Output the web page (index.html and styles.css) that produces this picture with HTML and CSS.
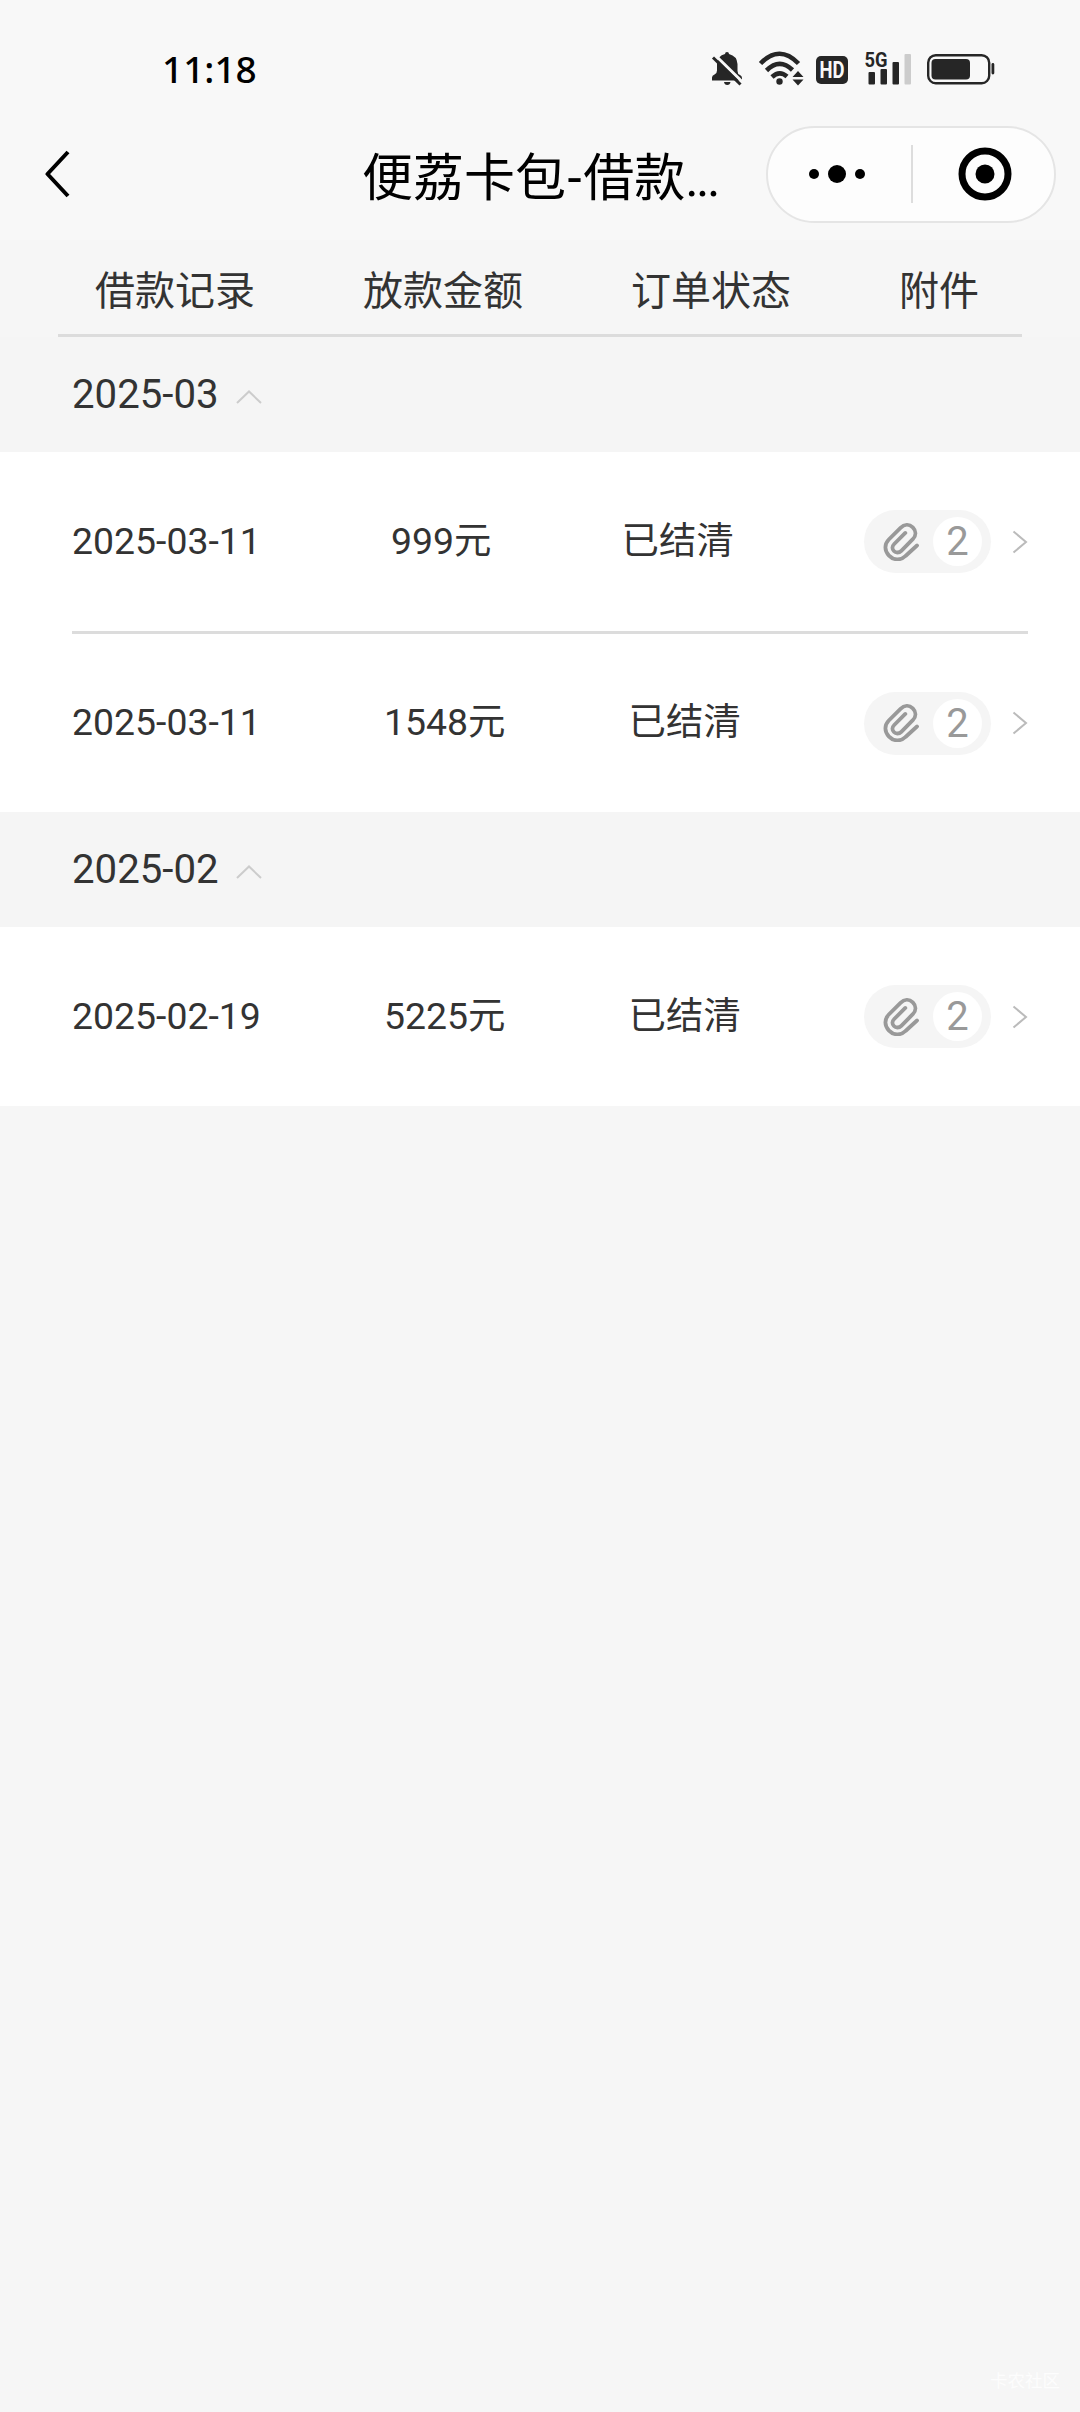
FILE: index.html
```html
<!DOCTYPE html>
<html lang="zh-CN">
<head>
  <meta charset="UTF-8" />
  <meta name="viewport" content="width=device-width, initial-scale=1.0"/>
  <title>便荔卡包-借款记录</title>
  <link rel="stylesheet" href="styles.css">
</head>
<body>
  <!-- shared icons -->
  <svg class="defs" width="0" height="0">
    <symbol id="clip" viewBox="0 0 36 38">
      <path d="M34 22.5 L22.5 33 C17.5 37.8 10.5 37.3 6 32.6 C1.3 27.8 1.2 21.3 5.8 16.5 L17.5 4.8 C21.2 1 26.2 1 29.8 4.4 C33.3 7.9 33.3 12.5 29.8 16.2 L18.3 27.8 C16 30.1 12.8 30 10.9 28 C8.9 26 9 23.2 11.2 21 L22.3 9.9" fill="none" stroke="#999" stroke-width="3.8" stroke-linecap="round" stroke-linejoin="round"/>
    </symbol>
    <symbol id="arrow" viewBox="0 0 16 24">
      <path d="M1.5 1.5 L14 12 L1.5 22.5" fill="none" stroke="#bbb" stroke-width="2"/>
    </symbol>
    <symbol id="up" viewBox="0 0 26 14">
      <path d="M1 13 L13 1.5 L25 13" fill="none" stroke="#ccc" stroke-width="2"/>
    </symbol>
  </svg>

  <div class="top">
    <div class="status">
      <span class="time">11:18</span>
      <svg class="status-icons" width="284" height="48" viewBox="711 45 284 48">
        <g fill="#262626">
          <!-- bell off -->
          <path d="M725 54 q0 -2 2 -2 q2 0 2 2 q8 2 8.500 10 v7 q0 3 2.500 4 q2 1 2 3 v2.500 h-30 v-3 q0 -2 2.500 -3 q2.500 -1 2.500 -4 v-7 q.5 -7.500 8 -9.500z"/>
          <path d="M724 82 h6.500 q-.5 3 -3.250 3 q-2.750 0 -3.250 -3z"/>
          <path d="M714.500 54.500 L743 82.500" stroke="#f8f8f8" stroke-width="3"/>
          <path d="M713 57.500 L740.500 84.500" stroke="#262626" stroke-width="3"/>
          <!-- wifi -->
          <g fill="none" stroke="#262626" stroke-width="4.600">
            <path d="M760.500 63.500 Q779.500 44 798.500 63.500"/>
            <path d="M766.500 70.500 Q779.500 57.500 792.500 70"/>
            <path d="M772 77 Q779.500 70 787 76.500"/>
          </g>
          <circle cx="779.500" cy="81.500" r="3.200"/>
          <path d="M792.500 77 L798 71 L803.500 77z M792.500 79.500 L798 85.500 L803.500 79.500z"/>
          <!-- HD -->
          <rect x="816" y="56" width="32" height="28" rx="5"/>
          <!-- signal -->
          <rect x="868.500" y="72" width="6.500" height="12.500" rx="1"/>
          <rect x="880.500" y="69" width="6.500" height="15.500" rx="1"/>
          <rect x="892.500" y="62" width="6.500" height="22.500" rx="1"/>
          <rect x="904.500" y="54" width="6.500" height="30.500" rx="1" fill="#ccc"/>
          <!-- battery -->
          <rect x="928.200" y="55.200" width="61" height="28" rx="7.500" fill="none" stroke="#262626" stroke-width="2.400"/>
          <rect x="931.500" y="59" width="38.500" height="20.500" rx="4"/>
          <rect x="991.500" y="63" width="2.800" height="11.500" rx="1.400"/>
        </g>
        <text class="hd" x="832" y="78" text-anchor="middle" textLength="25" lengthAdjust="spacingAndGlyphs">HD</text>
        <text class="net" x="864.500" y="67" textLength="23" lengthAdjust="spacingAndGlyphs">5G</text>
      </svg>
    </div>

    <div class="nav">
      <svg class="back" width="26" height="48" viewBox="0 0 26 48">
        <path d="M23 2 L2.500 24 L23 46" fill="none" stroke="#000" stroke-width="4" stroke-linejoin="round"/>
      </svg>
      <div class="title">便荔卡包<span class="dash">-</span>借款<span class="dots">...</span></div>
      <div class="capsule">
        <svg width="58" height="20" viewBox="0 0 58 20">
          <circle cx="6" cy="10" r="5"/>
          <circle cx="29" cy="10" r="9"/>
          <circle cx="52" cy="10" r="5"/>
        </svg>
        <span class="sep"></span>
        <svg width="54" height="54" viewBox="0 0 54 54">
          <circle cx="27" cy="27" r="23" fill="none" stroke="#000" stroke-width="7"/>
          <circle cx="27" cy="27" r="9.500"/>
        </svg>
      </div>
    </div>
  </div>

  <div class="thead">
    <span>借款记录</span>
    <span>放款金额</span>
    <span>订单状态</span>
    <span>附件</span>
  </div>

  <div class="month">2025-03 <svg width="26" height="14"><use href="#up"/></svg></div>
  <div class="list">
    <div class="row">
      <span>2025-03-11</span>
      <span>999元</span>
      <span>已结清</span>
      <div class="attach">
        <div class="pill"><svg width="36" height="38"><use href="#clip"/></svg><b>2</b></div>
        <svg width="16" height="24"><use href="#arrow"/></svg>
      </div>
    </div>
    <div class="row">
      <span>2025-03-11</span>
      <span>1548元</span>
      <span>已结清</span>
      <div class="attach">
        <div class="pill"><svg width="36" height="38"><use href="#clip"/></svg><b>2</b></div>
        <svg width="16" height="24"><use href="#arrow"/></svg>
      </div>
    </div>
  </div>

  <div class="month">2025-02 <svg width="26" height="14"><use href="#up"/></svg></div>
  <div class="list">
    <div class="row">
      <span>2025-02-19</span>
      <span>5225元</span>
      <span>已结清</span>
      <div class="attach">
        <div class="pill"><svg width="36" height="38"><use href="#clip"/></svg><b>2</b></div>
        <svg width="16" height="24"><use href="#arrow"/></svg>
      </div>
    </div>
  </div>

  <div class="watermark">卡农社区</div>
</body>
</html>
```
FILE: styles.css
```css
* {
  box-sizing: border-box;
}
body {
  margin: 0;
  min-height: 2412px;
  display: flex;
  flex-direction: column;
  background-color: #f6f6f6;
  color: #333;
  font-family: Roboto, 'Noto Sans CJK SC', sans-serif;
}
svg {
  display: block;
  flex: none;
}
.defs {
  position: absolute;
}
.top {
  height: 240px;
  background-color: #f8f8f8;
}
.status {
  height: 108px;
  padding: 30px 85px 0 162px;
  display: flex;
  align-items: center;
  justify-content: space-between;
}
.time {
  font-family: 'Noto Sans', sans-serif;
  font-size: 37px;
  font-weight: 500;
  line-height: 78px;
  color: #000;
}
.hd {
  font-size: 23px;
  font-weight: bold;
  fill: #f8f8f8;
}
.net {
  font-size: 21px;
  font-weight: bold;
  fill: #262626;
}
.nav {
  height: 132px;
  padding: 0 24px 0 45px;
  display: grid;
  grid-template-columns: 317px 1fr 290px;
  align-items: center;
}
.title {
  padding-top: 9px;
  font-size: 51px;
  line-height: 76px;
  color: #000;
  white-space: nowrap;
}
.dash {
  padding: 0 1.5px;
}
.dots {
  letter-spacing: -2.5px;
}
.capsule {
  height: 97px;
  padding: 0 42px 0 40px;
  display: flex;
  align-items: center;
  justify-content: space-between;
  background-color: #fdfdfd;
  border: 2px solid #e5e5e5;
  border-radius: 49px;
}
.sep {
  width: 2px;
  height: 58px;
  background-color: #ddd;
}
.thead {
  height: 97px;
  margin: 0 58px;
  padding: 0 0 0 37px;
  display: grid;
  grid-template-columns: 268px 268px 268px 1fr;
  border-bottom: 3px solid #dcdcdc;
  font-size: 40px;
  line-height: 103px;
}
.month {
  height: 115px;
  padding: 0 72px;
  display: flex;
  align-items: center;
  gap: 17px;
  background-color: #f5f5f5;
  font-size: 40.2px;
}
.month svg {
  margin-top: 5px;
}
.list {
  padding: 0 52px 0 72px;
  background-color: #fff;
}
.row {
  height: 179px;
  display: flex;
  align-items: center;
  justify-content: space-between;
  font-size: 37.4px;
}
.row + .row {
  height: 181px;
  border-top: 3px solid #dcdcdc;
}
.row > span {
  padding-bottom: 2px;
  line-height: 56px;
}
.attach {
  display: flex;
  align-items: center;
  gap: 21px;
}
.pill {
  width: 127px;
  height: 63px;
  padding: 0 9px 0 19px;
  display: flex;
  align-items: center;
  justify-content: space-between;
  background-color: #f5f5f5;
  border-radius: 32px;
}
.pill b {
  width: 49px;
  height: 49px;
  border-radius: 50%;
  background-color: #fff;
  color: #999;
  font-size: 40px;
  font-weight: 400;
  line-height: 49px;
  text-align: center;
}
.watermark {
  margin-top: auto;
  padding: 0 20px 17px 0;
  font-size: 17.5px;
  line-height: 28px;
  text-align: right;
  color: #fdfdfd;
}
```
